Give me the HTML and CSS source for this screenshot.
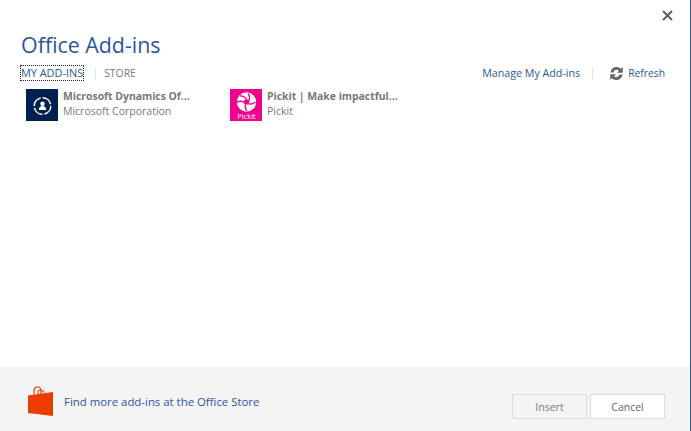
FILE: index.html
```html
<!DOCTYPE html>
<html lang="en">
<head>
<meta charset="utf-8">
<title>Office Add-ins</title>
<link rel="stylesheet" href="styles.css">
</head>
<body>
<div class="dialog">
  <main class="main">
    <div class="close-row">
      <svg class="close" width="11" height="11" viewBox="0 0 11 11"><path d="M1 1l9 9M10 1l-9 9" stroke="#5f5f5f" stroke-width="2" fill="none"/></svg>
    </div>
    <h1 class="title">Office Add-ins</h1>
    <div class="toolbar">
      <nav class="tabs">
        <span class="tab tab-active">MY ADD-INS</span>
        <span class="sep"></span>
        <span class="tab tab-store">STORE</span>
      </nav>
      <div class="actions">
        <span class="link link-manage">Manage My Add-ins</span>
        <span class="sep sep-wide"></span>
        <svg class="refresh-icon" width="15" height="15" viewBox="0 0 15 15"><path d="M1.600 6.400A6 6 0 0 1 11.900 2.800L13.800 0.900V6.800H7.900L9.900 4.800A3.300 3.300 0 0 0 4.400 6.400ZM13.400 8.600A6 6 0 0 1 3.100 12.200L1.200 14.100V8.200H7.100L5.100 10.200A3.300 3.300 0 0 0 10.600 8.600Z" fill="#666"/></svg>
        <span class="link link-refresh">Refresh</span>
      </div>
    </div>
    <div class="addins">
      <div class="addin">
        <svg class="addin-icon" width="32" height="32" viewBox="0 0 32 32">
          <rect width="32" height="32" fill="#002050"/>
          <circle cx="16.500" cy="17" r="8.300" fill="none" stroke="#fff" stroke-width="1.500" stroke-dasharray="11 2"/>
          <circle cx="16.500" cy="14.800" r="2.200" fill="#fff"/>
          <path d="M12.800 21c0-2.800 1.500-4 3.700-4s3.700 1.200 3.700 4z" fill="#fff"/>
        </svg>
        <div class="addin-text">
          <div class="addin-name">Microsoft Dynamics Of...</div>
          <div class="addin-by">Microsoft Corporation</div>
        </div>
      </div>
      <div class="addin">
        <svg class="addin-icon" width="32" height="32" viewBox="0 0 32 32">
          <rect width="32" height="32" fill="#f0008c"/>
          <circle cx="16.500" cy="13" r="9.700" fill="#fff"/>
          <circle cx="16.500" cy="13" r="2.800" fill="#f0008c"/>
          <path d="M16.500 10.200C14.500 7.500 12.500 6.500 10 7M19 11.700C20 9 19.700 6.500 18 4.500M18.700 14.800C21.500 15.400 24 14.600 25.500 12.800M15.500 15.700C15 18.500 15.500 20.500 17 22M14 13.300C11.500 11.800 9 12 7 13.500" stroke="#f0008c" stroke-width="1.300" fill="none"/>
          <text class="pickit-label" x="16.500" y="29.500" text-anchor="middle">Pickit</text>
        </svg>
        <div class="addin-text">
          <div class="addin-name">Pickit | Make impactful...</div>
          <div class="addin-by">Pickit</div>
        </div>
      </div>
    </div>
  </main>
  <footer class="footer">
    <div class="store">
      <svg class="bag" width="27" height="31" viewBox="0 0 27 31">
        <path d="M7 9V5C7 2.500 8.500 1 10.500 1S14 2.500 14 5V8M11 8V6C11 4.800 12 4 13.200 4S16.500 4.800 17.500 6.500" fill="none" stroke="#eb3c00" stroke-width="1.200"/>
        <path d="M1 9.500L26 6V30L1 27Z" fill="#eb3c00"/>
      </svg>
      <span class="store-link">Find more add-ins at the Office Store</span>
    </div>
    <div class="buttons">
      <button class="btn btn-disabled" type="button">Insert</button>
      <button class="btn" type="button">Cancel</button>
    </div>
  </footer>
</div>
</body>
</html>
```

FILE: styles.css
```css
* { box-sizing: border-box; }
html, body { margin: 0; height: 100%; }
body {
  background: #fff;
  font-family: "Open Sans", "Liberation Sans", sans-serif;
  overflow: hidden;
}
.dialog {
  width: 691px;
  height: 431px;
  display: flex;
  flex-direction: column;
  border-right: 1px solid #2b579a;
}
.main {
  flex: 1;
  padding: 10px 25px 0 21px;
}
.close-row {
  display: flex;
  justify-content: flex-end;
  height: 14px;
  margin-right: -8px;
}
.close { display: block; }
.title {
  margin: 6px 0 0;
  font-size: 21.400px;
  line-height: 29px;
  font-weight: 400;
  color: #2b579a;
}
.toolbar {
  display: flex;
  justify-content: space-between;
  align-items: center;
  margin-top: 4px;
  height: 20px;
}
.tabs, .actions { display: flex; align-items: center; }
.tab {
  font-size: 10.900px;
  line-height: 14px;
  color: #777;
}
.tab-store { font-size: 10.400px; }
.tab-active {
  color: #2b579a;
  outline: 1px dotted #222;
}
.sep {
  width: 1px;
  height: 11px;
  margin: 0 8px 0 12px;
  background: #dde3ee;
}
.sep-wide { margin: 0 16px 0 12px; background: #e2e2e2; }
.link {
  font-size: 10.500px;
  color: #2b579a;
}
.link-manage { font-size: 10.700px; }
.link-refresh { font-size: 10.300px; }
.refresh-icon { margin-right: 4px; }
.addins {
  display: flex;
  margin: 6px 0 0 5px;
}
.addin {
  display: flex;
  width: 204px;
  gap: 5px;
}
.addin-icon { display: block; flex: none; }
.addin-name {
  font-size: 10.400px;
  line-height: 15px;
  font-weight: 700;
  color: #777;
}
.addin-by {
  font-size: 10.500px;
  line-height: 15px;
  color: #777;
}
.pickit-label {
  font-size: 7.500px;
  fill: #fff;
}
.footer {
  height: 64px;
  background: #f4f4f4;
  display: flex;
  justify-content: space-between;
  padding: 0 25px 0 27px;
}
.store {
  display: flex;
  align-items: center;
  gap: 10px;
  margin-top: 5px;
}
.bag { display: block; }
.store-link {
  font-size: 11.400px;
  color: #2b579a;
}
.buttons {
  display: flex;
  gap: 3px;
  align-items: flex-start;
  padding-top: 27px;
}
.btn {
  width: 75px;
  height: 25px;
  padding: 0;
  font: inherit;
  font-size: 10.500px;
  color: #666;
  background: #fff;
  border: 1px solid #dcdcdc;
}
.btn-disabled { background: #f4f4f4; color: #777; }
```
